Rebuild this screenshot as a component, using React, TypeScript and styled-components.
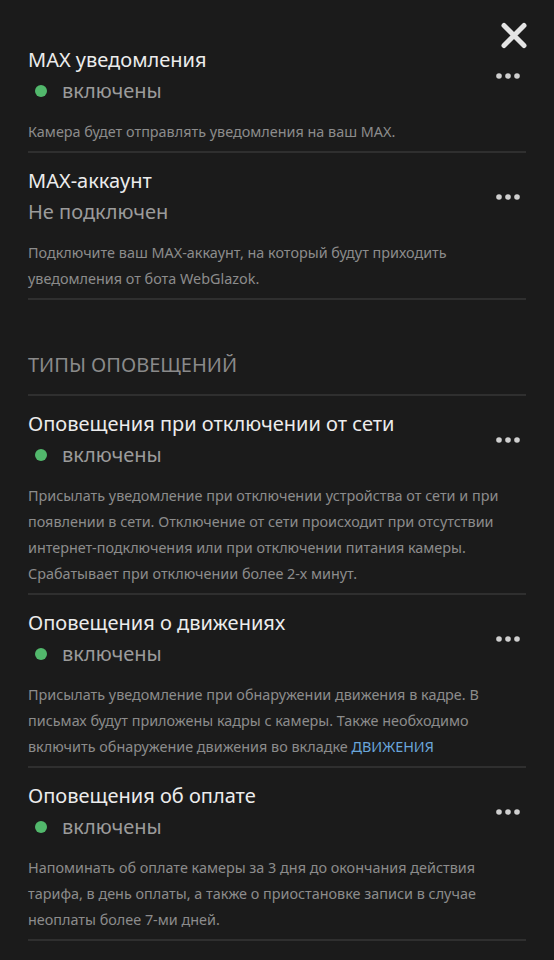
import React from "react";
import styled, { createGlobalStyle } from "styled-components";

const GlobalStyle = createGlobalStyle`
  html, body {
    margin: 0;
    padding: 0;
    background: #1b1b1b;
  }
  body {
    font-family: "Noto Sans", "Open Sans", sans-serif;
    -webkit-font-smoothing: antialiased;
  }
`;

const Page = styled.div`
  position: relative;
  min-height: 960px;
  padding: 0 28px;
  box-sizing: border-box;
  background: #1b1b1b;
`;

const CloseButton = styled.button`
  position: absolute;
  top: 22px;
  right: 26px;
  padding: 0;
  border: none;
  background: none;
  display: flex;
  cursor: pointer;
`;

const Row = styled.div<{ $first?: boolean }>`
  padding: ${(p) => (p.$first ? "45px" : "13px")} 0 6px;
  border-bottom: 2px solid #2f2f2f;
`;

const Head = styled.div`
  display: flex;
  align-items: center;
  justify-content: space-between;
`;

const Title = styled.div`
  font-size: 20px;
  line-height: 30px;
  color: #ececec;
`;

const Status = styled.div`
  display: flex;
  align-items: center;
  font-size: 20px;
  line-height: 32px;
  color: #9b9b9b;
`;

const Dot = styled.span`
  width: 12px;
  height: 12px;
  border-radius: 50%;
  background: #52b86c;
  margin: 0 15px 0 7px;
`;

const MenuButton = styled.button`
  padding: 0;
  margin-right: 6px;
  border: none;
  background: none;
  display: flex;
  cursor: pointer;
`;

const Description = styled.div`
  margin-top: 12px;
  font-size: 14.4px;
  line-height: 26px;
  color: #8c8c8c;
`;

const Link = styled.a`
  color: #6aa6da;
  text-decoration: none;
`;

const SectionTitle = styled.div`
  padding: 50px 0 14px;
  font-size: 20px;
  line-height: 30px;
  color: #8a8a8a;
  border-bottom: 2px solid #2f2f2f;
`;

interface INotice {
  title: string;
  status?: string;
  enabled?: boolean;
  text: React.ReactNode;
}

const notices: INotice[] = [
  {
    title: "Оповещения при отключении от сети",
    enabled: true,
    text:
      "Присылать уведомление при отключении устройства от сети и при появлении в сети. Отключение от сети происходит при отсутствии интернет-подключения или при отключении питания камеры. Срабатывает при отключении более 2-х минут.",
  },
  {
    title: "Оповещения о движениях",
    enabled: true,
    text: (
      <>
        Присылать уведомление при обнаружении движения в кадре. В письмах
        будут приложены кадры с камеры. Также необходимо включить обнаружение
        движения во вкладке <Link href="#">ДВИЖЕНИЯ</Link>
      </>
    ),
  },
  {
    title: "Оповещения об оплате",
    enabled: true,
    text:
      "Напоминать об оплате камеры за 3 дня до окончания действия тарифа, в день оплаты, а также о приостановке записи в случае неоплаты более 7-ми дней.",
  },
];

const CloseIcon = () => (
  <svg width="28" height="27" viewBox="0 0 28 27">
    <path
      d="M4 3.5 L24 23.5 M24 3.5 L4 23.5"
      stroke="#e4e4e4"
      strokeWidth="5"
      strokeLinecap="round"
      fill="none"
    />
  </svg>
);

const DotsIcon = () => (
  <svg width="24" height="6" viewBox="0 0 24 6">
    <circle cx="3" cy="3" r="2.8" fill="#cfcfcf" />
    <circle cx="12" cy="3" r="2.8" fill="#cfcfcf" />
    <circle cx="21" cy="3" r="2.8" fill="#cfcfcf" />
  </svg>
);

const Item = ({ title, status, enabled, text, first }: INotice & { first?: boolean }) => (
  <Row $first={first}>
    <Head>
      <div>
        <Title>{title}</Title>
        <Status>
          {enabled && <Dot />}
          {enabled ? "включены" : status}
        </Status>
      </div>
      <MenuButton aria-label="Меню">
        <DotsIcon />
      </MenuButton>
    </Head>
    <Description>{text}</Description>
  </Row>
);

const App = (): JSX.Element => (
  <Page>
    <GlobalStyle />
    <CloseButton aria-label="Закрыть">
      <CloseIcon />
    </CloseButton>
    <Item
      first
      title="MAX уведомления"
      enabled
      text="Камера будет отправлять уведомления на ваш MAX."
    />
    <Item
      title="MAX-аккаунт"
      status="Не подключен"
      text="Подключите ваш MAX-аккаунт, на который будут приходить уведомления от бота WebGlazok."
    />
    <SectionTitle>ТИПЫ ОПОВЕЩЕНИЙ</SectionTitle>
    {notices.map((n) => (
      <Item key={n.title} {...n} />
    ))}
  </Page>
);

export default App;
